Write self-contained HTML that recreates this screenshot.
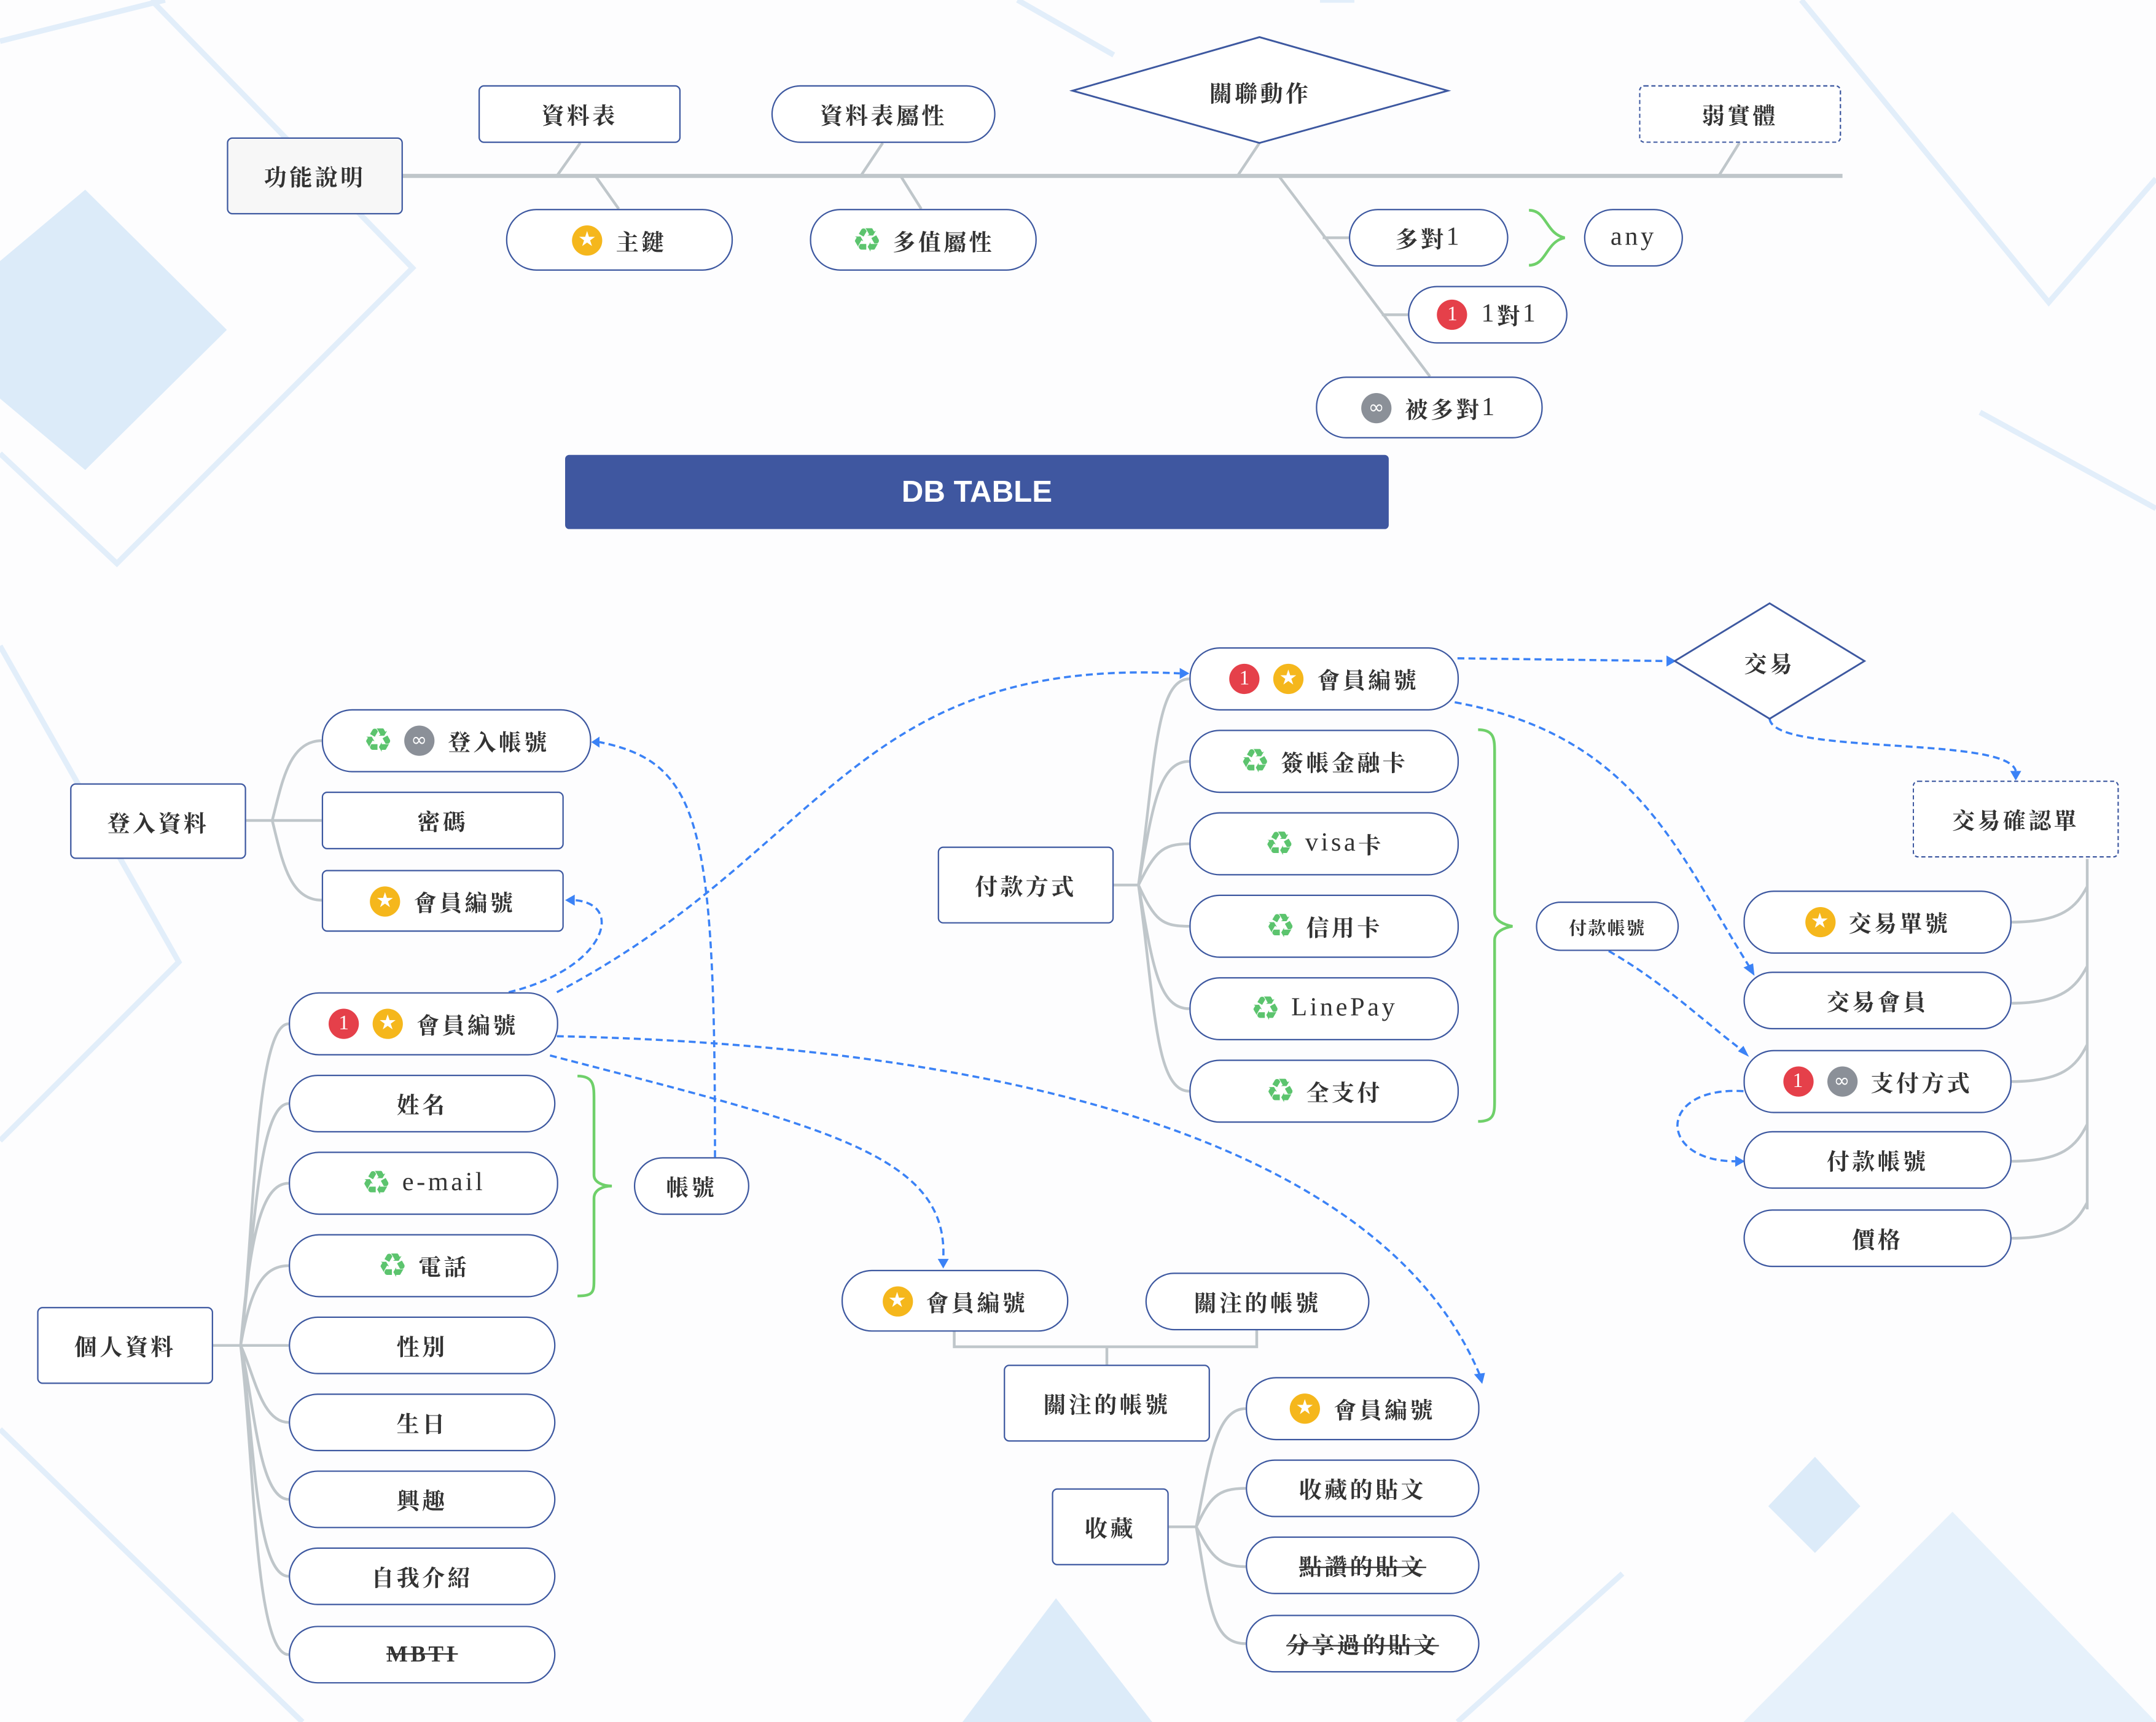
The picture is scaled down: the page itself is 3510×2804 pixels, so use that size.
<!DOCTYPE html>
<html><head><meta charset="utf-8"><style>
html,body{margin:0;padding:0;background:#fff;}
body{width:3510px;height:2804px;overflow:hidden;position:relative;}
#c{position:absolute;left:0;top:0;width:1568px;height:1253px;transform-origin:0 0;transform:scale(2.2385,2.2378);background:#fdfdfe;}
svg{position:absolute;left:0;top:0;}
.n{position:absolute;box-sizing:border-box;border:1.3px solid #3d58a0;background:#fff;display:flex;align-items:center;justify-content:center;font-family:"Liberation Serif","Noto Serif CJK SC","Noto Sans CJK TC",serif;font-weight:bold;font-size:16.5px;color:#333;letter-spacing:2px;white-space:nowrap;}
.r{border-radius:4px;}
.p{border-radius:22px;}
.g{background:#f7f7f7;}
.d{border-style:dashed;}
.s{text-decoration:line-through;}
.i{display:inline-block;width:22px;height:22px;border-radius:50%;margin-right:10px;color:#fff;font-size:15px;line-height:22px;text-align:center;letter-spacing:0;font-weight:normal;font-family:"Liberation Serif",serif;}
.st{background:#f5b71c;}
.one{background:#e5404a;}
.inf{background:#8b9098;font-family:"DejaVu Sans",sans-serif;font-size:14px;}
.rc{color:#5cc46e;font-size:24px;margin-right:8px;font-family:"DejaVu Sans",sans-serif;font-weight:normal;letter-spacing:0;}
.lt{font-weight:normal;font-family:"Liberation Serif",serif;font-size:19px;}
</style></head><body><div id="c">
<svg width="1568" height="1253">
<g fill="#dcebf9" stroke="none">
<polygon points="0,190 62,138 165,240 62,342 0,290"/>
<polygon points="1320,1060 1353,1096 1320,1130 1286,1096"/>
<polygon points="700,1253 768,1163 838,1253"/>
<polygon points="1268,1253 1420,1100 1568,1253" fill="#e6f1fb"/>
</g>
<g fill="none" stroke="#e2eefa" stroke-width="4">
<polyline points="0,30 120,0"/><polyline points="110,0 300,195 85,410 0,330"/>
<polyline points="0,470 130,700 0,830"/><polyline points="1310,0 1490,220 1568,130"/>
<polyline points="1568,370 1440,300"/><polyline points="960,0 985,0"/>
<polyline points="0,1040 220,1253"/><polyline points="1180,1145 1060,1253"/>
<polyline points="740,0 810,40"/>
</g>
<g fill="none" stroke="#bfc6ca" stroke-width="2">
<line x1="293" y1="128" x2="1340" y2="128" stroke-width="3"/>
<line x1="422" y1="104" x2="405" y2="128"/><line x1="433" y1="128" x2="450" y2="152"/>
<line x1="642" y1="104" x2="626" y2="128"/><line x1="655" y1="128" x2="670" y2="152"/>
<line x1="916" y1="104" x2="900" y2="128"/><line x1="1265" y1="104" x2="1250" y2="128"/>
<line x1="930" y1="128" x2="1040" y2="274"/>
<line x1="962" y1="173" x2="981" y2="173"/><line x1="1005" y1="229" x2="1024" y2="229"/>
<!-- login -->
<path d="M179,597 H198 M198,597 C205,570 210,539 234,539 M198,597 H234 M198,597 C205,625 210,655 234,655"/>
<!-- personal -->
<path d="M155,979 H175"/>
<path d="M175,979 C185,900 185,745 210,745 M175,979 C185,900 188,803 210,803 M175,979 C182,900 190,861 210,861 M175,979 C182,940 190,921 210,921 M175,979 H210 M175,979 C185,1000 190,1035 210,1035 M175,979 C185,1020 188,1091 210,1091 M175,979 C185,1040 185,1147 210,1147 M175,979 C185,1060 185,1204 210,1204"/>
<!-- payment -->
<path d="M810,644 H828 M828,644 C840,560 840,494 865,494 M828,644 C838,590 842,554 865,554 M828,644 C840,620 845,614 865,614 M828,644 C840,670 845,674 865,674 M828,644 C838,700 842,734 865,734 M828,644 C840,730 840,794 865,794"/>
<!-- deal -->
<path d="M1518,625 V880 M1463,671 C1500,671 1510,660 1518,645 M1463,730 C1500,730 1510,718 1518,703 M1463,787 C1500,787 1510,776 1518,760 M1463,845 C1500,845 1510,834 1518,818 M1463,901 C1500,901 1510,890 1518,875"/>
<!-- follow -->
<path d="M694,969 V980 H914 V968 M805,980 V993"/>
<!-- collect -->
<path d="M850,1111 H870 M870,1111 C880,1060 885,1025 906,1025 M870,1111 C880,1090 885,1083 906,1083 M870,1111 C880,1130 885,1140 906,1140 M870,1111 C880,1170 882,1196 906,1196"/>
</g>
<g fill="none" stroke="#6fd06a" stroke-width="2">
<path d="M1112,153 C1125,153 1124,170 1138,173 C1124,176 1125,193 1112,193"/>
<path d="M420,783 C432,783 432,790 432,800 V855 C432,860 438,863 445,863 C438,863 432,866 432,872 V930 C432,940 432,943 420,943"/>
<path d="M1075,531 C1087,531 1087,538 1087,548 V664 C1087,670 1094,673 1100,674 C1094,675 1087,678 1087,684 V800 C1087,810 1087,816 1075,816"/>
</g>
<g fill="none" stroke="#3b82f6" stroke-width="1.6" stroke-dasharray="5,3">
<path d="M520,842 C520,600 510,555 436,540"/>
<path d="M370,722 C440,705 455,658 418,655"/>
<path d="M405,722 C600,620 620,478 858,490"/>
<path d="M400,768 C600,820 690,840 686,916"/>
<path d="M405,754 C700,760 1000,820 1076,1000"/>
<path d="M1060,479 L1212,481"/>
<path d="M1058,511 C1190,535 1220,620 1272,703"/>
<path d="M1287,523 C1290,550 1460,535 1466,561"/>
<path d="M1170,692 C1210,715 1235,740 1268,765"/>
<path d="M1268,794 C1205,790 1205,845 1262,845"/>
</g>
<g fill="#3b82f6">
<polygon points="436,536 430,540 436,544"/><polygon points="418,651 411,655 418,659"/>
<polygon points="858,486 865,490 858,494"/><polygon points="682,916 686,923 690,916"/>
<polygon points="1072,1000 1078,1007 1080,999"/><polygon points="1212,477 1219,481 1212,485"/>
<polygon points="1268,704 1276,710 1275,701"/><polygon points="1462,561 1466,568 1470,561"/>
<polygon points="1264,765 1272,769 1268,761"/><polygon points="1262,841 1269,845 1262,849"/>
</g>
<polygon points="780,66 916,27 1053,66 916,104" fill="#fff" stroke="#3d58a0" stroke-width="1.3"/>
<polygon points="1218,481 1287,439 1356,481 1287,523" fill="#fff" stroke="#3d58a0" stroke-width="1.3"/>
<rect x="411" y="331" width="599" height="54" rx="3" fill="#3f57a0"/>
</svg>
<div class="n" style="left:780px;top:50px;width:273px;height:34px;border:none;background:none">關聯動作</div>
<div class="n" style="left:1218px;top:465px;width:138px;height:34px;border:none;background:none">交易</div>
<div class="n" style="left:411px;top:331px;width:599px;height:54px;border:none;background:none;color:#fff;font-family:'Liberation Sans',sans-serif;font-size:22px;letter-spacing:0;">DB TABLE</div>

<div class="n r g" style="left:165px;top:100px;width:128px;height:56px">功能說明</div>
<div class="n r" style="left:348px;top:62px;width:147px;height:42px">資料表</div>
<div class="n p" style="left:561px;top:62px;width:163px;height:42px">資料表屬性</div>
<div class="n r d" style="left:1192px;top:62px;width:147px;height:42px">弱實體</div>
<div class="n p" style="left:368px;top:152px;width:165px;height:45px"><span class="i st">★</span>主鍵</div>
<div class="n p" style="left:589px;top:152px;width:165px;height:45px"><span class="rc">♻</span>多值屬性</div>
<div class="n p" style="left:981px;top:152px;width:116px;height:42px">多對<span class="lt">1</span></div>
<div class="n p" style="left:1152px;top:152px;width:72px;height:42px"><span class="lt">any</span></div>
<div class="n p" style="left:1024px;top:208px;width:116px;height:42px"><span class="i one">1</span><span class="lt">1</span>對<span class="lt">1</span></div>
<div class="n p" style="left:957px;top:274px;width:165px;height:45px"><span class="i inf">∞</span>被多對<span class="lt">1</span></div>

<div class="n r" style="left:51px;top:570px;width:128px;height:55px">登入資料</div>
<div class="n p" style="left:234px;top:516px;width:196px;height:46px"><span class="rc">♻</span><span class="i inf">∞</span>登入帳號</div>
<div class="n r" style="left:234px;top:576px;width:176px;height:42px">密碼</div>
<div class="n r" style="left:234px;top:633px;width:176px;height:45px"><span class="i st">★</span>會員編號</div>

<div class="n r" style="left:27px;top:951px;width:128px;height:56px">個人資料</div>
<div class="n p" style="left:210px;top:722px;width:196px;height:46px"><span class="i one">1</span><span class="i st">★</span>會員編號</div>
<div class="n p" style="left:210px;top:782px;width:194px;height:42px">姓名</div>
<div class="n p" style="left:210px;top:838px;width:196px;height:46px"><span class="rc">♻</span><span class="lt">e-mail</span></div>
<div class="n p" style="left:210px;top:898px;width:196px;height:46px"><span class="rc">♻</span>電話</div>
<div class="n p" style="left:210px;top:958px;width:194px;height:42px">性別</div>
<div class="n p" style="left:210px;top:1014px;width:194px;height:42px">生日</div>
<div class="n p" style="left:210px;top:1070px;width:194px;height:42px">興趣</div>
<div class="n p" style="left:210px;top:1126px;width:194px;height:42px">自我介紹</div>
<div class="n p s" style="left:210px;top:1183px;width:194px;height:42px">MBTI</div>
<div class="n p" style="left:461px;top:842px;width:84px;height:42px">帳號</div>

<div class="n r" style="left:682px;top:616px;width:128px;height:56px">付款方式</div>
<div class="n p" style="left:865px;top:471px;width:196px;height:46px"><span class="i one">1</span><span class="i st">★</span>會員編號</div>
<div class="n p" style="left:865px;top:531px;width:196px;height:46px"><span class="rc">♻</span>簽帳金融卡</div>
<div class="n p" style="left:865px;top:591px;width:196px;height:46px"><span class="rc">♻</span><span class="lt">visa</span>卡</div>
<div class="n p" style="left:865px;top:651px;width:196px;height:46px"><span class="rc">♻</span>信用卡</div>
<div class="n p" style="left:865px;top:711px;width:196px;height:46px"><span class="rc">♻</span><span class="lt">LinePay</span></div>
<div class="n p" style="left:865px;top:771px;width:196px;height:46px"><span class="rc">♻</span>全支付</div>
<div class="n p" style="left:1117px;top:656px;width:104px;height:36px;font-size:13px;letter-spacing:1px">付款帳號</div>

<div class="n r d" style="left:1391px;top:568px;width:150px;height:56px">交易確認單</div>
<div class="n p" style="left:1268px;top:648px;width:195px;height:46px"><span class="i st">★</span>交易單號</div>
<div class="n p" style="left:1268px;top:707px;width:195px;height:42px">交易會員</div>
<div class="n p" style="left:1268px;top:764px;width:195px;height:46px"><span class="i one">1</span><span class="i inf">∞</span>支付方式</div>
<div class="n p" style="left:1268px;top:823px;width:195px;height:42px">付款帳號</div>
<div class="n p" style="left:1268px;top:880px;width:195px;height:42px">價格</div>

<div class="n p" style="left:612px;top:924px;width:165px;height:45px"><span class="i st">★</span>會員編號</div>
<div class="n p" style="left:833px;top:926px;width:163px;height:42px">關注的帳號</div>
<div class="n r" style="left:730px;top:993px;width:150px;height:56px">關注的帳號</div>
<div class="n r" style="left:765px;top:1083px;width:85px;height:56px">收藏</div>
<div class="n p" style="left:906px;top:1002px;width:170px;height:46px"><span class="i st">★</span>會員編號</div>
<div class="n p" style="left:906px;top:1062px;width:170px;height:42px">收藏的貼文</div>
<div class="n p s" style="left:906px;top:1118px;width:170px;height:42px">點讚的貼文</div>
<div class="n p s" style="left:906px;top:1175px;width:170px;height:42px">分享過的貼文</div>
</div></body></html>
